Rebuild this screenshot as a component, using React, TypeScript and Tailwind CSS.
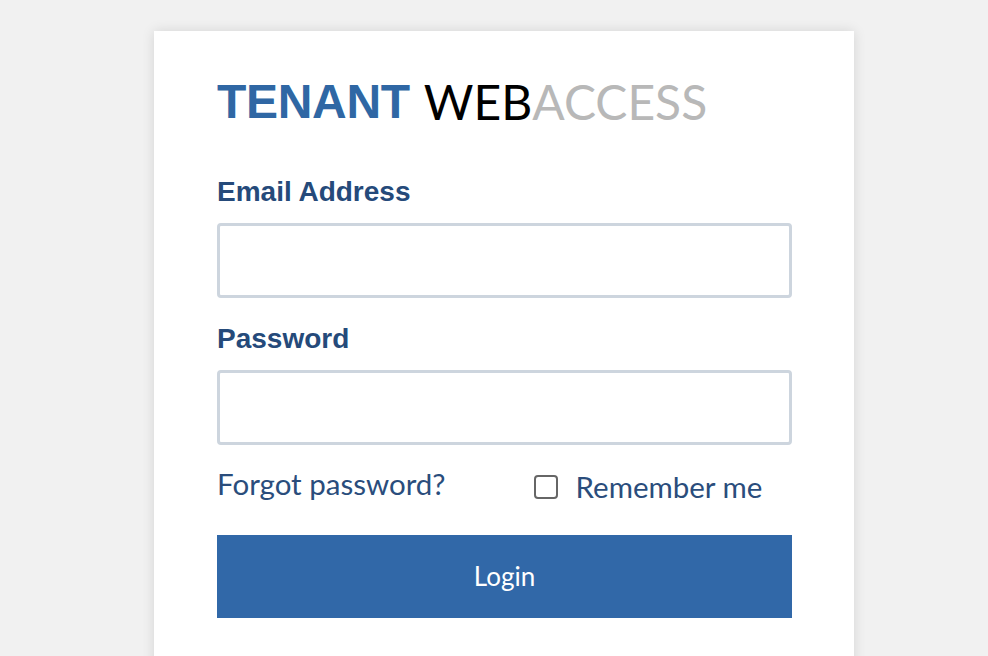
import { useState } from "react";

export default function App() {
  const [remember, setRemember] = useState(false);

  return (
    <main className="min-h-screen w-full bg-[#f1f1f1] pt-[31px]">
      <div className="ml-[154px] h-[640px] w-[700px] bg-white pl-[63px] pr-[62px] pt-[43px] shadow-[0_0_12px_rgba(0,0,0,0.12)]">
        <h1 className="flex h-[56px] items-center leading-none">
          <span className="font-['Liberation_Sans',Arial,sans-serif] text-[48px] font-bold tracking-[-0.3px] text-[#2f67a4]">
            TENANT
          </span>
          <span className="ml-[14px] font-['Lato',sans-serif] text-[48px] font-normal text-black">
            WEB
          </span>
          <span className="font-['Lato',sans-serif] text-[48px] font-normal text-[#b8b8b8]">
            ACCESS
          </span>
        </h1>

        <form className="mt-[45px] font-['Liberation_Sans',Arial,sans-serif]">
          <label className="block text-[28px] font-bold leading-[34px] text-[#254a7a]">
            Email Address
          </label>
          <input
            type="email"
            className="mt-[14px] block h-[75px] w-full rounded-[4px] border-[3px] border-[#cdd5de] bg-white px-4 text-[24px] outline-none"
          />

          <label className="mt-[24px] block text-[28px] font-bold leading-[34px] text-[#254a7a]">
            Password
          </label>
          <input
            type="password"
            className="mt-[14px] block h-[75px] w-full rounded-[4px] border-[3px] border-[#cdd5de] bg-white px-4 text-[24px] outline-none"
          />

          <div className="mt-[18px] flex items-center font-['Lato',sans-serif] text-[29.5px] text-[#2a4d7c]">
            <a href="#" className="leading-[36px]">
              Forgot password?
            </a>
            <label className="ml-[88px] mt-[6px] flex items-center">
              <span
                onClick={() => setRemember(!remember)}
                className="h-[24px] w-[24px] rounded-[4px] border-2 border-[#666] bg-white"
              />
              <span className="ml-[18px] leading-[36px]">Remember me</span>
            </label>
          </div>

          <button
            type="button"
            className="mt-[30px] block h-[83px] w-full bg-[#3168a8] font-['Lato',sans-serif] text-[26px] text-white"
          >
            Login
          </button>
        </form>
      </div>
    </main>
  );
}
